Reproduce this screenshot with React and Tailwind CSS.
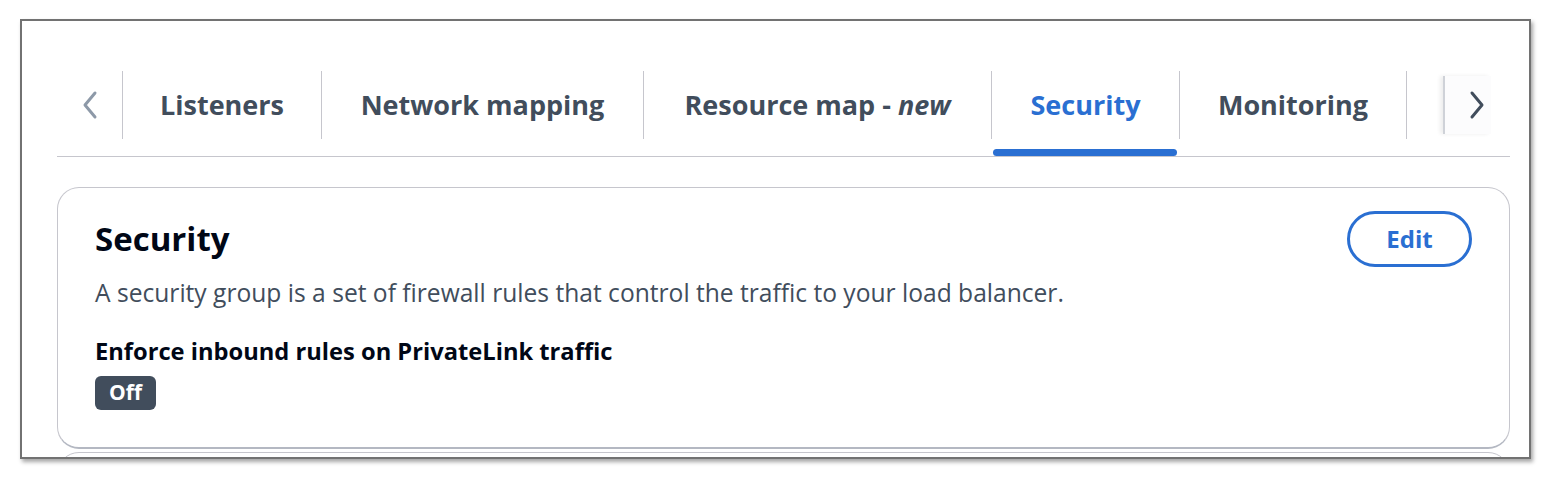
import React from "react";

const tabs = [
  { label: "Listeners", w: "w-[199px]" },
  { label: "Network mapping", w: "w-[322px]" },
  { label: "Resource map", italic: "new", w: "w-[348px]" },
  { label: "Security", w: "w-[188px]", active: true },
  { label: "Monitoring", w: "w-[227px]" },
];

function Chevron({ dir, color }) {
  return (
    <svg width="18" height="30" viewBox="0 0 18 30" fill="none">
      <path
        d={dir === "left" ? "M14 3 L4 15 L14 27" : "M4 3 L14 15 L4 27"}
        stroke={color}
        strokeWidth="3"
        strokeLinecap="round"
        strokeLinejoin="round"
      />
    </svg>
  );
}

export default function App() {
  return (
    <div className="w-[1546px] h-[484px] bg-white" style={{ fontFamily: '"Open Sans", sans-serif' }}>
      <div className="pt-[19px] pl-[20px]">
        <div className="w-[1511px] h-[440px] border-2 border-[#727272] bg-white shadow-[2px_3px_4px_rgba(0,0,0,0.35)] overflow-hidden">
          <div className="pl-[35px] pr-[19px] pt-[50px]">
            {/* Tab bar */}
            <div className="flex border-b border-[#c6c6cd]">
              <div className="w-[65px] flex flex-col">
                <div className="h-[68px] flex items-center justify-center">
                  <Chevron dir="left" color="#8d99a8" />
                </div>
              </div>
              {tabs.map((t) => (
                <div key={t.label} className={`${t.w} flex flex-col shrink-0`}>
                  <div
                    className={`h-[68px] border-l border-[#c6c6cd] flex items-center justify-center text-[27px] font-bold ${
                      t.active ? "text-[#2a6fd2]" : "text-[#414d5c]"
                    }`}
                  >
                    <span className="pt-[1px]">
                      {t.label}
                      {t.italic && (
                        <>
                          {" - "}
                          <em className="italic">{t.italic}</em>
                        </>
                      )}
                    </span>
                  </div>
                  <div className="h-[17px] flex items-end px-[2px]">
                    {t.active && <div className="h-[7px] w-full rounded-full bg-[#2a6fd2]" />}
                  </div>
                </div>
              ))}
              <div className="w-[37px] flex flex-col shrink-0">
                <div className="h-[68px] border-l border-[#c6c6cd]" />
              </div>
              <div className="flex-1 flex flex-col">
                <div className="h-[68px] flex items-center">
                  <div className="w-[48px] h-[58px] border-l-2 border-[#cfd2d8] bg-[#fcfcfd] shadow-[-3px_0_4px_rgba(0,0,0,0.07)] flex items-center pl-[23px]">
                    <Chevron dir="right" color="#414d5c" />
                  </div>
                </div>
              </div>
            </div>

            {/* Card */}
            <div className="mt-[30px] rounded-[22px] border border-[#c6c6cd] border-b-2 border-b-[#b4b8c2] h-[262px] pl-[37px] pr-[37px] pt-[23px] flex justify-between">
              <div>
                <h2 className="text-[33px] leading-[40px] font-bold text-[#000716] mt-[8px]">Security</h2>
                <p className="text-[24.6px] leading-[34px] text-[#414d5c] mt-[17px]">
                  A security group is a set of firewall rules that control the traffic to your load balancer.
                </p>
                <div className="mt-[24px] text-[23.7px] leading-[34px] font-bold text-[#000716]">
                  Enforce inbound rules on PrivateLink traffic
                </div>
                <div className="mt-[8px] inline-flex items-center h-[34px] px-[14px] rounded-[6px] bg-[#414d5c] text-white text-[21px] font-bold">
                  Off
                </div>
              </div>
              <div>
                <button className="w-[125px] h-[56px] rounded-full border-[3px] border-[#2a6fd2] text-[#2a6fd2] text-[24px] font-bold">
                  Edit
                </button>
              </div>
            </div>
            <div className="mt-[3px] rounded-[22px] border border-[#c6c6cd] h-[60px]" />
          </div>
        </div>
      </div>
    </div>
  );
}
